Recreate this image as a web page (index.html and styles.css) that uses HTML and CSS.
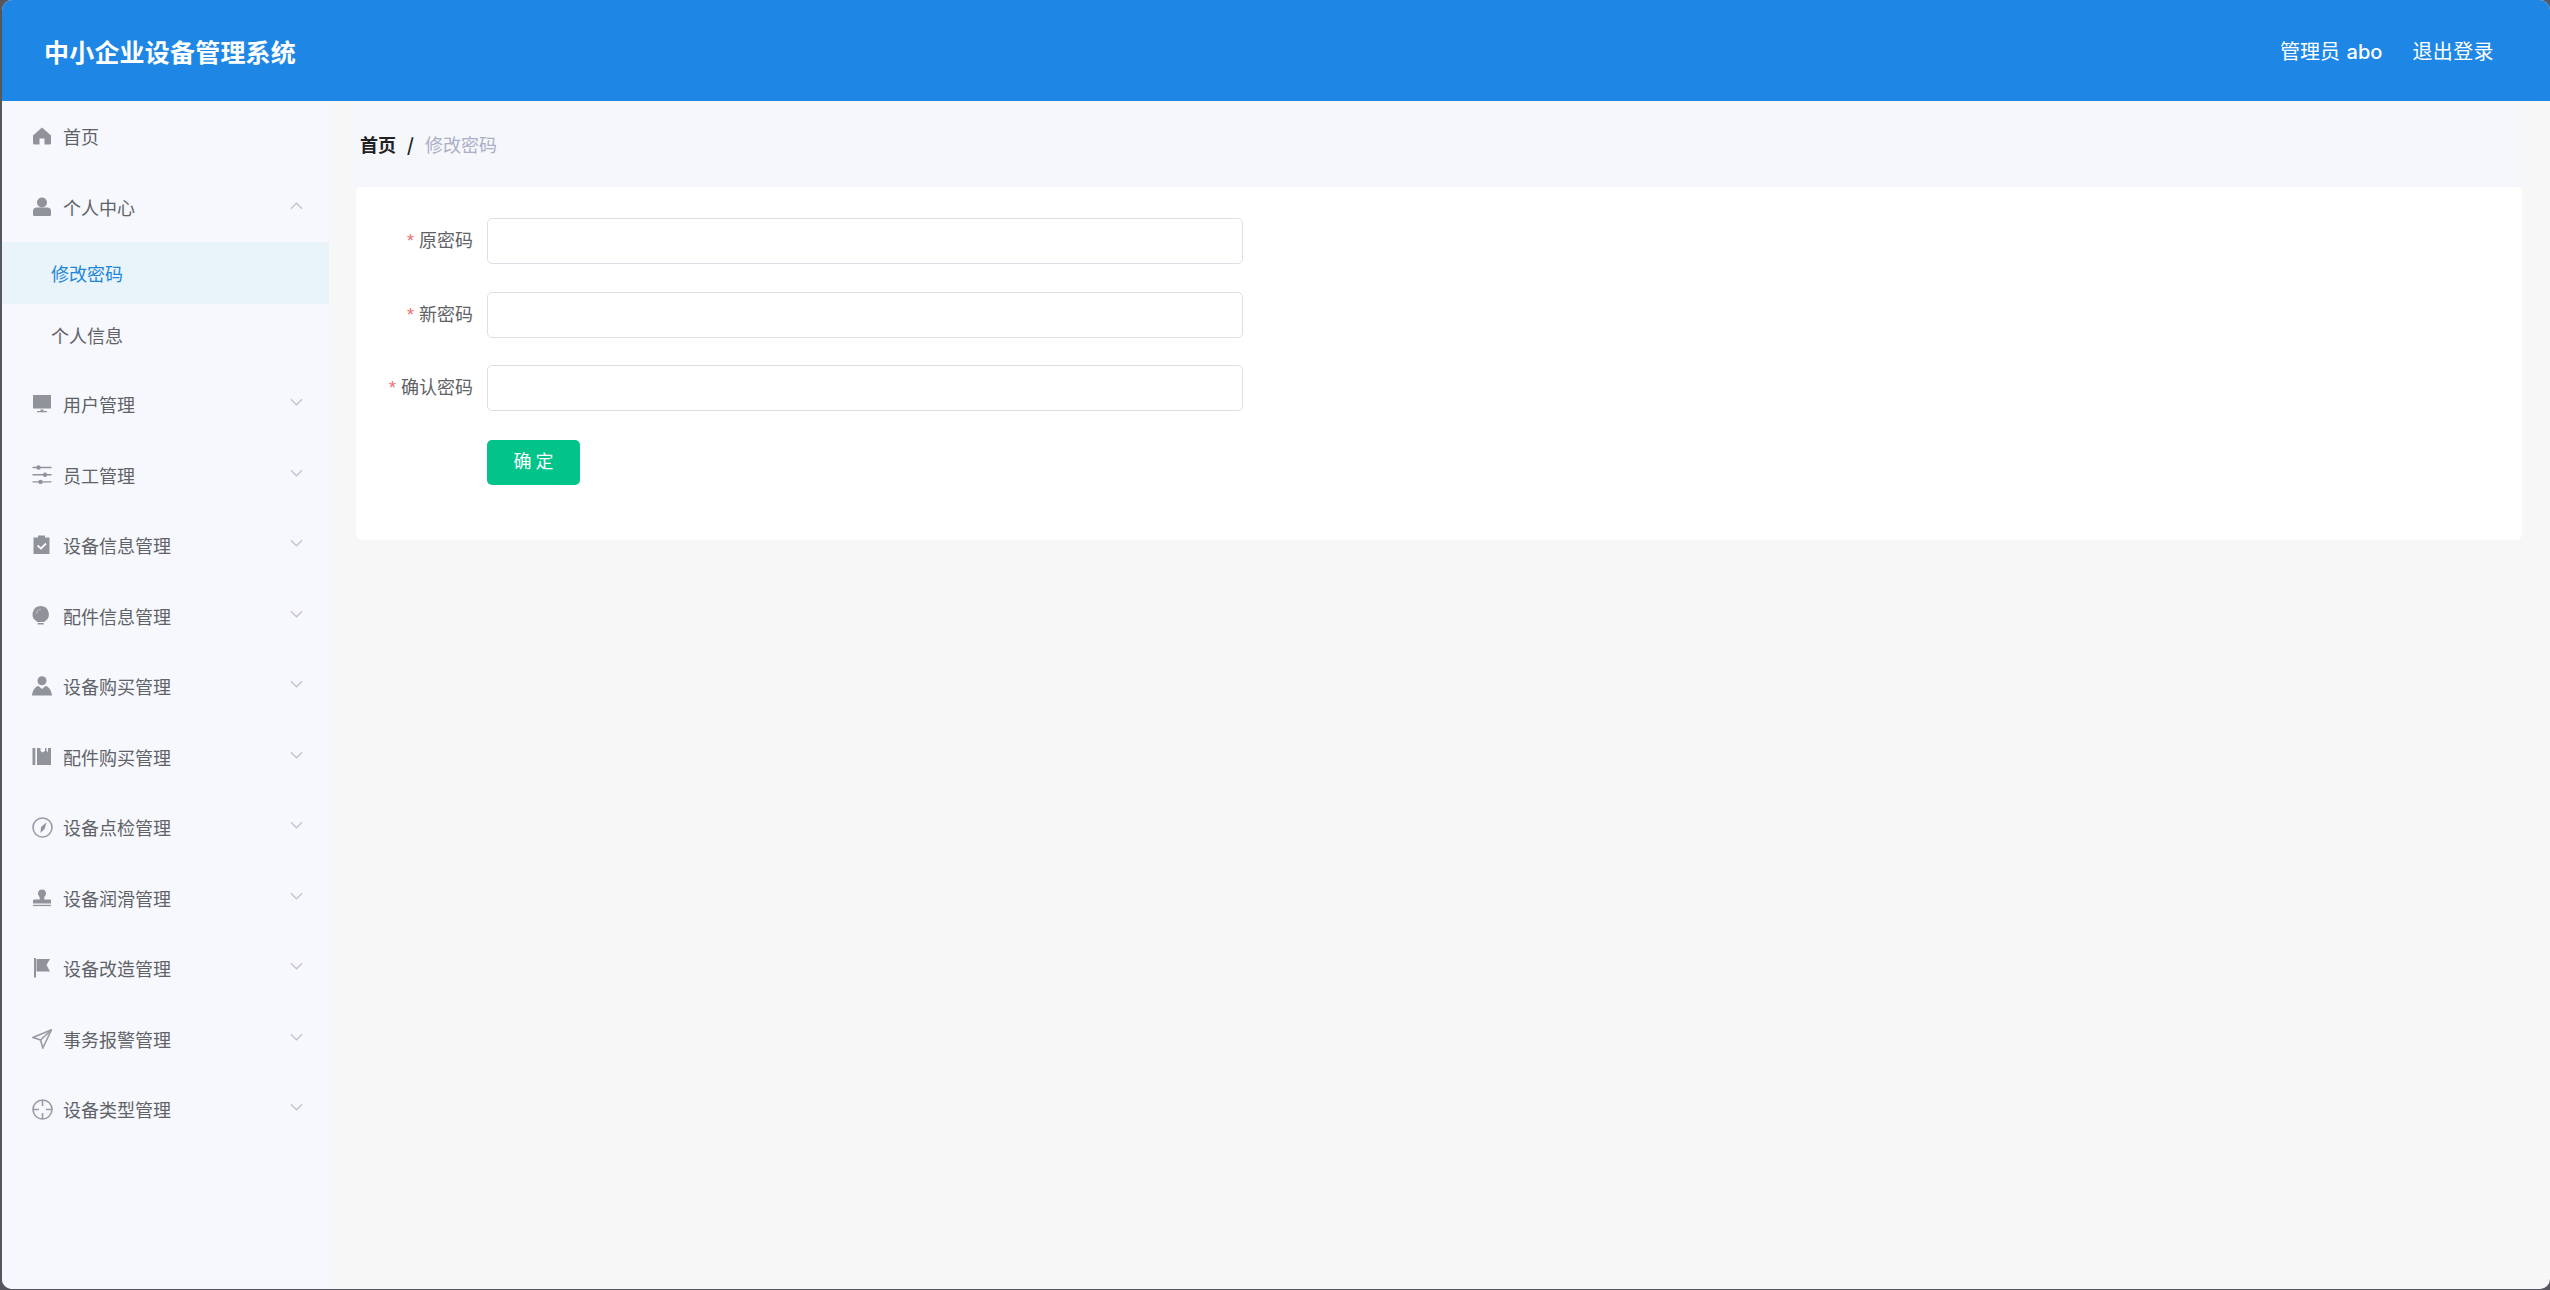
FILE: index.html
```html
<!DOCTYPE html>
<html lang="zh-CN">
<head>
    <meta charset="UTF-8">
    <title>中小企业设备管理系统</title>
    <link rel="stylesheet" href="styles.css">
</head>
<body>
<div class="app">
    <header class="top-bar">
        <div class="logo">中小企业设备管理系统</div>
        <div class="user-box">
            <span>管理员 <span class="user-name">abo</span></span>
            <span class="logout">退出登录</span>
        </div>
    </header>

    <div class="page">
        <aside class="side-menu">
            <div class="menu-row">
                <svg class="menu-icon" viewBox="0 0 20 20"><path d="M10 1.500 1 9.500v7.500a1.500 1.500 0 0 0 1.500 1.500h5v-6h5v6h5a1.500 1.500 0 0 0 1.500-1.500V9.500z"/></svg>
                <span>首页</span>
            </div>
            <div class="menu-row">
                <svg class="menu-icon" viewBox="0 0 20 20"><circle cx="10" cy="5.500" r="5"/><path d="M1 14c0-2 1.500-3.500 3.500-3.500h11c2 0 3.500 1.500 3.500 3.500v3.500a1.500 1.500 0 0 1-1.500 1.500h-15A1.500 1.500 0 0 1 1 17.500z"/></svg>
                <span>个人中心</span>
                <svg class="arrow up" viewBox="0 0 14 8"><path d="M1 7l6-6 6 6"/></svg>
            </div>
            <div class="sub-list">
                <div class="sub-row active">修改密码</div>
                <div class="sub-row">个人信息</div>
            </div>
            <div class="menu-row">
                <svg class="menu-icon" viewBox="0 0 20 20"><path d="M1 1h18v13.500H1z"/><path d="M8.500 15.500h3V17H15v1.200H5V17h3.500z"/></svg>
                <span>用户管理</span>
                <svg class="arrow" viewBox="0 0 14 8"><path d="M1 1l6 6 6-6"/></svg>
            </div>
            <div class="menu-row">
                <svg class="menu-icon" viewBox="0 0 20 20"><path d="M0.500 1.800h19v1.400H0.500zM0.500 9h19v1.400H0.500zM0.500 16.200h19v1.400H0.500z"/><circle cx="6.500" cy="2.500" r="2.200"/><circle cx="13" cy="9.700" r="2.200"/><circle cx="8.500" cy="16.900" r="2.200"/></svg>
                <span>员工管理</span>
                <svg class="arrow" viewBox="0 0 14 8"><path d="M1 1l6 6 6-6"/></svg>
            </div>
            <div class="menu-row">
                <svg class="menu-icon" viewBox="0 0 20 20"><path d="M6 0.500h7V2.500h4.500v16.500h-16V2.500H6z"/><path class="cut" d="M5.500 10.500 9 13.500l5-5"/></svg>
                <span>设备信息管理</span>
                <svg class="arrow" viewBox="0 0 14 8"><path d="M1 1l6 6 6-6"/></svg>
            </div>
            <div class="menu-row">
                <svg class="menu-icon" viewBox="0 0 20 20"><path d="M8.700 0a8.200 8.200 0 0 1 4 15.300V16H4.700v-.7A8.200 8.200 0 0 1 8.700 0z"/><path d="M5.700 17h6v1.500h-6z"/><path class="glow" d="M4.500 8a4.500 4.500 0 0 1 4.500-4.800"/></svg>
                <span>配件信息管理</span>
                <svg class="arrow" viewBox="0 0 14 8"><path d="M1 1l6 6 6-6"/></svg>
            </div>
            <div class="menu-row">
                <svg class="menu-icon" viewBox="0 0 20 20"><circle cx="10" cy="4.700" r="4.500"/><path d="M0 19.500c.5-5 3-9 6.500-9.500L10 13l3.500-3c3.500.5 6 4.500 6.500 9.500z"/></svg>
                <span>设备购买管理</span>
                <svg class="arrow" viewBox="0 0 14 8"><path d="M1 1l6 6 6-6"/></svg>
            </div>
            <div class="menu-row">
                <svg class="menu-icon" viewBox="0 0 20 20"><path d="M0.500 1h2.800v17H0.500zM5 1h3.500v3l2 1.500L13 4V1h1.500v3l1.500 1V1h3v17H5z"/></svg>
                <span>配件购买管理</span>
                <svg class="arrow" viewBox="0 0 14 8"><path d="M1 1l6 6 6-6"/></svg>
            </div>
            <div class="menu-row">
                <svg class="menu-icon wide" viewBox="-0.500 -0.500 21 21"><circle class="ring" cx="10" cy="10" r="9.500"/><path d="M14 4.800 12 11.500 8 15.500 8.500 9.500z"/></svg>
                <span>设备点检管理</span>
                <svg class="arrow" viewBox="0 0 14 8"><path d="M1 1l6 6 6-6"/></svg>
            </div>
            <div class="menu-row">
                <svg class="menu-icon" viewBox="0 0 20 20"><path d="M10 1.500a4 4 0 0 1 3 6.800c-1 1.100-1 2.200-.5 3.200H18a1 1 0 0 1 1 1v3H1v-3a1 1 0 0 1 1-1h5.500c.5-1 .5-2.100-.5-3.200a4 4 0 0 1 3-6.800z"/><path d="M1 16.800h18v1.300H1z"/></svg>
                <span>设备润滑管理</span>
                <svg class="arrow" viewBox="0 0 14 8"><path d="M1 1l6 6 6-6"/></svg>
            </div>
            <div class="menu-row">
                <svg class="menu-icon" viewBox="0 0 20 20"><path d="M2 0h2v19.500H2zM4.500 1H18l-3.500 6 3.500 6.500H4.500z"/></svg>
                <span>设备改造管理</span>
                <svg class="arrow" viewBox="0 0 14 8"><path d="M1 1l6 6 6-6"/></svg>
            </div>
            <div class="menu-row">
                <svg class="menu-icon" viewBox="0 0 20 20"><path class="ring" d="M19.500 0.800 1 8.500l7.500 2.500 2.300 8z"/><path class="ring" d="M8.500 11 19.500 0.800"/></svg>
                <span>事务报警管理</span>
                <svg class="arrow" viewBox="0 0 14 8"><path d="M1 1l6 6 6-6"/></svg>
            </div>
            <div class="menu-row">
                <svg class="menu-icon wide" viewBox="-0.500 -0.500 21 21"><circle class="ring" cx="10" cy="10" r="9.500"/><path class="ring" d="M10 0.500v6M10 13.500v6M0.500 10h6M13.500 10h6"/></svg>
                <span>设备类型管理</span>
                <svg class="arrow" viewBox="0 0 14 8"><path d="M1 1l6 6 6-6"/></svg>
            </div>
        </aside>

        <main class="content">
            <div class="crumb">
                <b>首页</b>
                <i>/</i>
                <span>修改密码</span>
            </div>
            <form class="pwd-card">
                <div class="form-row">
                    <label><em>*</em>原密码</label>
                    <input type="password">
                </div>
                <div class="form-row">
                    <label><em>*</em>新密码</label>
                    <input type="password">
                </div>
                <div class="form-row">
                    <label><em>*</em>确认密码</label>
                    <input type="password">
                </div>
                <div class="form-row">
                    <label></label>
                    <button type="button" class="ok-btn">确 定</button>
                </div>
            </form>
        </main>
    </div>
</div>
</body>
</html>
```

FILE: styles.css
```css
* {
    box-sizing: border-box;
}

html, body {
    height: 100%;
}

body {
    margin: 0;
    background-color: #56565e;
    font-family: "Noto Sans CJK SC", "Noto Sans", sans-serif;
    font-size: 18px;
    color: #606266;
    overflow: hidden;
}

.app {
    height: 1289px;
    margin-left: 2px;
    border-radius: 10px;
    overflow: hidden;
    background-color: #f7f7f8;
}

.top-bar {
    height: 101px;
    padding: 0 56px 0 42px;
    display: flex;
    align-items: center;
    justify-content: space-between;
    background-color: #1e87e6;
    color: #fff;
}

.logo {
    font-size: 25px;
    font-weight: 700;
    letter-spacing: 0.2px;
}

.user-box {
    display: flex;
    gap: 30px;
    font-size: 20px;
}

.user-name {
    margin-left: 2px;
    font-family: Inter, sans-serif;
    font-weight: 500;
}

.logout {
    letter-spacing: 0.4px;
}

.page {
    display: flex;
    height: 1188px;
}

.side-menu {
    width: 328px;
    flex-shrink: 0;
    background-color: #f6f8fd;
}

.menu-row {
    height: 70.5px;
    padding-left: 30px;
    display: flex;
    align-items: center;
    gap: 11px;
    position: relative;
}

.menu-icon {
    width: 20px;
    height: 20px;
    fill: #909399;
    flex-shrink: 0;
}

.menu-icon.wide {
    width: 21px;
    height: 21px;
    margin: 0 -0.5px;
}

.menu-icon .ring {
    fill: none;
    stroke: #9a9ca3;
    stroke-width: 1.6;
}

.menu-icon .cut {
    fill: none;
    stroke: #f6f8fd;
    stroke-width: 1.8;
}

.menu-icon .glow {
    fill: none;
    stroke: #b4b6bc;
    stroke-width: 1.2;
}

.arrow {
    width: 13px;
    height: 8px;
    position: absolute;
    right: 27px;
    top: 29px;
    fill: none;
    stroke: #c0c4cc;
    stroke-width: 1.4;
}

.arrow.up {
    top: 30px;
}

.sub-list {
    padding-bottom: 3px;
}

.sub-row {
    height: 62px;
    padding-left: 49px;
    display: flex;
    align-items: center;
}

.sub-row.active {
    margin-right: 1px;
    color: #2186d8;
    background-color: #e9f3fa;
}

.content {
    flex: 1;
    padding: 0 28px 0 26px;
}

.crumb {
    height: 86px;
    margin: 0 -3px;
    padding-left: 7px;
    display: flex;
    align-items: center;
    gap: 11px;
    background-color: #f6f7fb;
    color: #a9afc6;
}

.crumb b {
    color: #222;
    font-weight: 700;
}

.crumb i {
    color: #222;
    font-style: normal;
    font-weight: 700;
}

.pwd-card {
    height: 353px;
    padding-top: 31px;
    border-radius: 6px;
    background-color: #fff;
}

.form-row {
    display: flex;
    align-items: center;
    height: 46px;
    margin-bottom: 27.5px;
}

.form-row label {
    width: 131px;
    padding-right: 14px;
    padding-bottom: 4px;
    text-align: right;
}

.form-row label em {
    margin-right: 5px;
    font-family: "Liberation Sans", sans-serif;
    color: #f56c6c;
    font-style: normal;
}

.form-row input {
    width: 756px;
    height: 46px;
    border: 1px solid #dcdfe6;
    border-radius: 5px;
    background-color: #fff;
}

.ok-btn {
    width: 93px;
    height: 45px;
    margin-top: 1px;
    padding-bottom: 5px;
    border: none;
    border-radius: 5px;
    background-color: #02c389;
    color: #fff;
    font-family: inherit;
    font-size: 18px;
}
```
